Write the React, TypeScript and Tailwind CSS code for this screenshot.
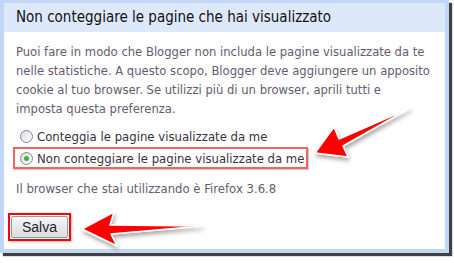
import React from "react";

function Radio({ checked }: { checked?: boolean }) {
  return (
    <span className="flex h-[13px] w-[13px] shrink-0 items-center justify-center rounded-full border border-[#7b8798] bg-gradient-to-br from-[#dcdcdc] to-white">
      {checked && <span className="h-[5px] w-[5px] rounded-full bg-[#3fae3f]" />}
    </span>
  );
}

function Arrows() {
  return (
    <svg
      className="pointer-events-none absolute left-0 top-0"
      width={454}
      height={263}
      viewBox="0 0 454 263"
    >
      <defs>
        <filter id="sh" x="-20%" y="-20%" width="140%" height="160%">
          <feDropShadow dx="1" dy="3" stdDeviation="2" floodColor="#000" floodOpacity="0.35" />
        </filter>
      </defs>
      <polygon
        points="315,153 334,127 339,139 410,108 343,146 348,157"
        fill="#f00"
        stroke="#fff"
        strokeWidth={1.5}
        strokeLinejoin="round"
        filter="url(#sh)"
      />
      <polygon
        points="82,229 114,212 110,225 202,226 111,234 117,246"
        fill="#f00"
        stroke="#fff"
        strokeWidth={1.5}
        strokeLinejoin="round"
        filter="url(#sh)"
      />
    </svg>
  );
}

export default function App() {
  return (
    <div className="relative h-[263px] w-[454px] bg-white font-['DejaVu_Sans_Condensed','DejaVu_Sans',sans-serif]">
      <div className="flex h-[253px] w-[449px] flex-col border-x-4 border-b-4 border-t-[3px] border-[#c2d6f7] shadow-[3px_3px_1px_rgba(30,30,30,0.85)]">
        <div className="flex h-[29px] items-center bg-[#dde9fb] pl-[12px] text-[15px] text-[#111]">
          Non conteggiare le pagine che hai visualizzato
        </div>
        <div className="flex flex-1 flex-col bg-white px-[12px] pt-[10px] text-[13px] leading-[19px] text-[#665b70]">
          <p className="whitespace-nowrap text-[12.9px]">
            Puoi fare in modo che Blogger non includa le pagine visualizzate da te
            <br />
            nelle statistiche. A questo scopo, Blogger deve aggiungere un apposito
            <br />
            cookie al tuo browser. Se utilizzi più di un browser, aprili tutti e
            <br />
            imposta questa preferenza.
          </p>
          <div className="mt-[8px] flex flex-col text-[#3a3040]">
            <label className="flex h-[20px] items-center gap-[4px] pl-[4px]">
              <Radio />
              Conteggia le pagine visualizzate da me
            </label>
            <label className="ml-[-3px] mt-[1px] flex h-[22px] w-[295px] items-center gap-[4px] border-2 border-[#f26464] pl-[5px] shadow-[1px_1px_1px_#ccc]">
              <Radio checked />
              Non conteggiare le pagine visualizzate da me
            </label>
          </div>
          <p className="mt-[10px]">Il browser che stai utilizzando è Firefox 3.6.8</p>
          <div className="mt-[15px] ml-[-8px] w-[63px] border-2 border-[#f00] p-[1px] shadow-[1px_1px_2px_#bbb]">
            <button className="h-[22px] w-full rounded-[2px] border border-[#9a9a9a] bg-gradient-to-b from-[#f6f6f6] to-[#dcdcdc] font-['Liberation_Sans',sans-serif] text-[14px] text-[#223]">
              Salva
            </button>
          </div>
        </div>
      </div>
      <Arrows />
    </div>
  );
}
